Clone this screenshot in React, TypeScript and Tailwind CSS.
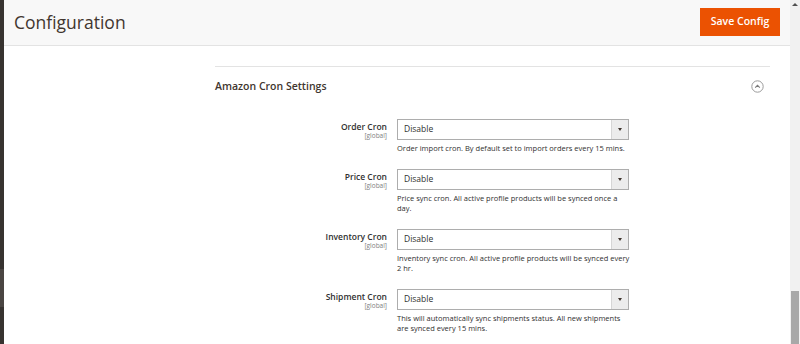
import React from "react";

type CronRow = {
  label: string;
  note: string;
};

const rows: CronRow[] = [
  {
    label: "Order Cron",
    note: "Order import cron. By default set to import orders every 15 mins.",
  },
  {
    label: "Price Cron",
    note: "Price sync cron. All active profile products will be synced once a day.",
  },
  {
    label: "Inventory Cron",
    note: "Inventory sync cron. All active profile products will be synced every 2 hr.",
  },
  {
    label: "Shipment Cron",
    note: "This will automatically sync shipments status. All new shipments are synced every 15 mins.",
  },
];

function CollapseIcon() {
  return (
    <svg width="13" height="13" viewBox="0 0 13 13" fill="none">
      <circle cx="6.5" cy="6.5" r="5.7" stroke="#9a9a9a" strokeWidth="1" />
      <polyline
        points="4.2,7.6 6.5,5.3 8.8,7.6"
        stroke="#7a7a7a"
        strokeWidth="1.1"
        fill="none"
      />
    </svg>
  );
}

function Field({ row }: { row: CronRow }) {
  return (
    <div className="flex">
      {/* label column */}
      <div className="w-[173px] shrink-0 pr-[1px] pt-[2px] text-right">
        <div className="text-[8.5px] font-semibold leading-[11px] text-[#303030]">
          {row.label}
        </div>
        <div className="text-[6.5px] leading-[8px] text-[#808080]">[global]</div>
      </div>

      {/* control column */}
      <div className="ml-[9px] w-[232px] shrink-0">
        <div className="flex h-[21px] border border-[#adadad] bg-white">
          <div className="flex flex-1 items-center pl-[6px] text-[8.5px] text-[#303030]">
            Disable
          </div>
          <div className="flex w-[17px] items-center justify-center border-l border-[#d6d6d6] bg-[#ececec]">
            <span className="h-0 w-0 border-x-[2.5px] border-t-[3px] border-x-transparent border-t-[#41362f]" />
          </div>
        </div>
        <p className="mt-[3px] w-[234px] text-[7.5px] leading-[10px] text-[#303030]">
          {row.note}
        </p>
      </div>
    </div>
  );
}

export default function App() {
  return (
    <div
      className="flex h-[344px] w-[800px] overflow-hidden bg-white"
      style={{ fontFamily: '"Open Sans", "Noto Sans", sans-serif' }}
    >
      {/* admin side menu edge */}
      <div className="flex w-[4px] shrink-0 flex-col bg-[#373330]">
        <div className="h-[269px]" />
        <div className="h-[38px] bg-[#4a4542]" />
        <div className="flex-1" />
      </div>

      {/* page */}
      <div className="flex min-w-0 flex-1 flex-col">
        {/* page header */}
        <header className="flex h-[46px] shrink-0 items-center justify-between border-b border-[#e3e3e3] bg-[#f8f8f8] pl-[10px] pr-[10px]">
          <h1 className="pb-[1px] text-[17.5px] font-normal text-[#41362f]">
            Configuration
          </h1>
          <button className="mb-[2px] h-[28px] w-[80px] bg-[#eb5202] text-[10.5px] font-semibold text-white">
            Save Config
          </button>
        </header>

        {/* body */}
        <div className="flex flex-1">
          <div className="w-[211px] shrink-0" />

          <section className="mt-[20px] w-[555px] shrink-0 border-t border-[#e3e3e3]">
            <div className="flex items-center justify-between pb-[26px] pl-0 pr-[6px] pt-[12px]">
              <h2 className="text-[10.5px] font-semibold leading-[14px] text-[#41362f]">
                Amazon Cron Settings
              </h2>
              <CollapseIcon />
            </div>

            <div className="flex flex-col gap-[16px]">
              {rows.map((row) => (
                <Field key={row.label} row={row} />
              ))}
            </div>
          </section>
        </div>
      </div>

      {/* scrollbar */}
      <div className="flex w-[10px] shrink-0 flex-col bg-[#f1f1f1]">
        <div className="flex h-[8px] items-center justify-center">
          <span className="h-0 w-0 border-x-[3px] border-b-[3px] border-x-transparent border-b-[#505050]" />
        </div>
        <div className="flex-1" />
        <div className="mx-[1px] h-[53px] bg-[#a8a8a8]" />
      </div>
    </div>
  );
}
